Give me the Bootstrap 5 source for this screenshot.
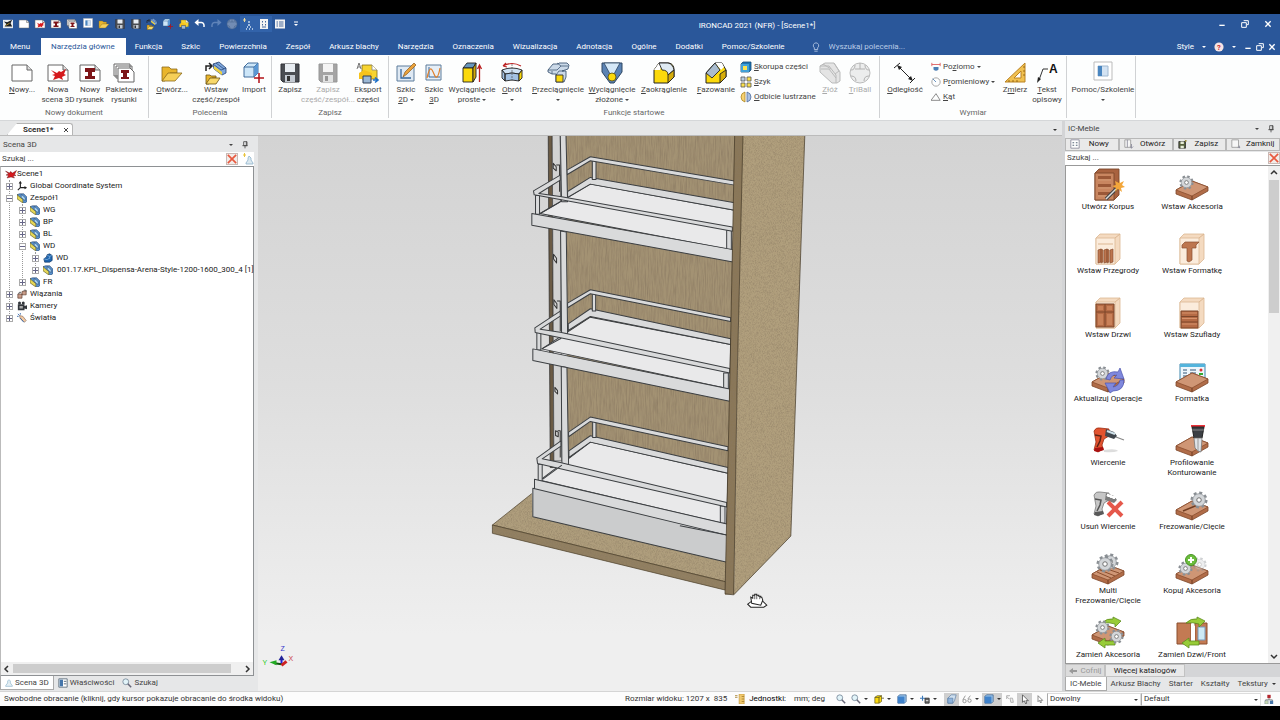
<!DOCTYPE html>
<html lang="pl">
<head>
<meta charset="utf-8">
<meta name="viewport" content="width=device-width, initial-scale=1">
<title>IRONCAD 2021 (NFR) - [Scene1*]</title>
<link href="https://cdn.jsdelivr.net/npm/bootstrap@5.3.0/dist/css/bootstrap.min.css" rel="stylesheet">
<style>
:root{--blue:#2a579a;--panel:#e6e7e8;--line:#a9abad}
body{font-family:Roboto,"Noto Sans",sans-serif;font-size:8px;line-height:10px;color:#333;background:#000;height:100vh;overflow:hidden;padding:14px 0}
button,input,select{font:inherit;color:inherit}
button{background:none;border:0;padding:0}
a{color:inherit;text-decoration:none}
svg{display:block;flex:none}
.i8{width:8px;height:8px}.i10{width:10px;height:10px}.i12{width:12px;height:12px}.i24{width:24px;height:24px}.i32{width:34px;height:34px}
.caret{width:0;height:0;border:2px solid transparent;border-top-color:currentColor;border-bottom:0;display:inline-block;vertical-align:middle;flex:none}
.head{background:var(--blue);color:#fff}
.titlebar{height:24px;padding-bottom:4px}
.titletext{padding-top:3px}
.quick button{width:16px;height:16px;display:grid;place-items:center}
.quick .lit{background:#3263aa}
.wide-gap{gap:15px}
.menu{height:17px}
.menu a{padding:0 10px 0 9px;line-height:18px;height:17px;white-space:nowrap;color:#fff}
.menu a.wide{padding:0 11px 0 10px}
.menu a.active{background:#fff;color:var(--blue)}
.hint{color:#b9cbe6;background:none;border:0;width:120px;padding:0}
.hint::placeholder{color:#b9cbe6;opacity:1}
.ribbon{background:#fdfefe;height:66px;border-bottom:1px solid #d5d7d9}
.grp{border-right:1px solid #d0d2d4;padding:5px 3px 0;margin:1px 0 2px}
.grp-name{color:#666;text-align:center;line-height:10px;margin-top:3px;height:10px}
.tools{height:44px}
.tool{display:flex;flex-direction:column;align-items:center;white-space:nowrap;line-height:10px;color:#444;overflow:visible}
.tool span{text-align:center}
.tool:disabled,.off{color:#aaa}
.tool:disabled svg{opacity:.5;filter:grayscale(1)}
.w28{width:28px}.w32{width:32px}.w36{width:36px}.w40{width:40px}.w44{width:44px}.w48{width:48px}.w56{width:56px}.w60{width:60px}.w64{width:64px}.w72{width:72px}.w76{width:76px}
.stack{margin-top:-2px}
.stack button{display:flex;align-items:center;gap:2px;height:15px;white-space:nowrap;color:#444}
.work{background:var(--panel)}
.docbar{height:15px;border-bottom:1px solid #bbb;padding:2px 5px 0 7px}
.doctab{background:#fff;border:1px solid #b5b5b5;border-bottom:0;border-radius:0 3px 0 0;padding:0 2px 0 15px;height:12px;width:66px;clip-path:polygon(10px 0,100% 0,100% 100%,0 100%)}
.left-pane{width:254px}
.pane-title{height:16px;padding:1px 5px 0 3px;color:#444}
.findbox{background:#fff;height:14px}
.findbox input{border:0;padding:0 2px;width:100%;min-width:0;background:none;line-height:12px}
.findbox input::placeholder{color:#444;opacity:1}
.clear{width:12px;height:12px;border:1px solid #c9b9b5;background:#f2ece9;display:grid;place-items:center;flex:none}
.treebox{background:#fff;border:1px solid #8e9194;border-left-color:#bbb}
.tree,.tree ul{list-style:none;margin:0;padding:0;position:relative}
.tree{padding-top:1px}
.tree ul{margin-left:13px}
.tree ul::before{content:"";position:absolute;left:8px;top:0;bottom:6px;border-left:1px dotted #999}
.tree>ul{margin-left:0}
.node{display:flex;align-items:center;height:12px;padding-left:5px;white-space:nowrap;position:relative;color:#222}
.node .txt{margin-left:3px}
.exp{width:7px;height:7px;border:1px solid #aaa;background:#fff;display:grid;place-items:center;margin-right:4px;flex:none}
.exp svg{width:5px;height:5px}
.hbar{height:13px;background:#f0f0f0;padding:0 2px}
.hbar i{background:#cdcdcd;height:9px;margin:0 12px 0 2px}
.ptabs{height:15px}
.ptabs a{display:flex;align-items:center;gap:2px;padding:0 4px;color:#444;height:14px;white-space:nowrap}
.ptabs a.active{background:#fff;border:1px solid #aaa;border-top:0}
.view{background:linear-gradient(#d3d3d3,#dedede 45%,#efefef 90%);min-width:0}
.view svg{width:100%;height:100%}
.right-pane{width:218px;border-left:3px solid #d3d4d6;background:var(--panel)}
.cmds{padding:1px 0}
.cmds button{border:1px solid #b8b8b8;background:#e9e9e9;height:13px;display:flex;align-items:center;flex:1;color:#222}
.cmds button span{flex:1;text-align:center}
.cat{background:#fff;border:1px solid #999;border-right:0;overflow:hidden;min-height:0}
.items{display:grid;grid-template-columns:84px 84px;grid-auto-rows:64px;align-content:start;padding-top:2px;flex:1}
.items button{display:flex;flex-direction:column;align-items:center;color:#222}
.vbar{width:12px;background:#f0f0f0;padding:3px 1px}
.vbar i{background:#cdcdcd;height:133px;width:10px;margin:3px 0 auto}
.more{height:13px;background:#d4d5d7}
.more button{border:1px solid #c2c2c2;background:#e9e9e9;color:#222}
.more button:disabled{color:#999;background:#dcdcdc}
.cofnij{width:40px}.wiecej{width:80px}
.status{background:#fcfcfc;height:15px;border-top:1px solid #d5d5d5;white-space:nowrap}
.status select{border:1px solid #ddd;border-left-color:#aaa;background:#fff;appearance:none;padding:0 2px;height:13px;border-radius:0;width:100%}
.drop{position:relative}
.drop .caret{position:absolute;right:3px;top:6px}
.selA{width:94px}.selB{width:120px}
.status button{display:flex;align-items:center;justify-content:center;gap:3px;height:13px}
.st1{width:15px}.st2{width:23px}.st3{width:20px}
.status .on{background:#cfcfcf}
</style>
</head>
<body class="d-flex flex-column">

<svg width="0" height="0" class="position-absolute" aria-hidden="true"><defs>
<symbol id="page" viewBox="0 0 24 24"><path d="M2 4h15l5 5v11H2z" fill="#fff" stroke="#666"/><path d="M17 4v5h5" fill="#ddd" stroke="#666"/></symbol>
<symbol id="app" viewBox="0 0 12 12"><path d="M0 1h12v10H0z" fill="#e9ecef"/><path d="M1 3l4 1 6-3-2 4 2 4H2l2-3z" fill="#1b1d1f"/><path d="M3 8l5-3" stroke="#c9a12c"/></symbol>
<symbol id="bird" viewBox="0 0 24 24"><path d="M1 6l8 4 2-3 4 3 8-5-4 8 3 2-6 1 3 4-7-2-8 2 3-5-5-1 5-2z" fill="#d5191c" stroke="#5e1013" stroke-width=".8"/></symbol>
<symbol id="scene" viewBox="0 0 24 24"><use href="#page"/><path d="M5 9l6 3 2-2 2 1 5-3-2 5 2 1-4 2 1 3-4-2-6 2 2-4-3-1 3-1z" fill="#d5191c"/></symbol>
<symbol id="draw" viewBox="0 0 24 24"><use href="#page"/><path d="M7 7h10v4h-3v4h3v3H7v-3h3v-4H7z" fill="#7d1518"/></symbol>
<symbol id="batch" viewBox="0 0 24 24"><path d="M2 3h16v12H2zM4 5h16v12H4z" fill="#fff" stroke="#666"/><path d="M6 7h12l4 4v10H6z" fill="#fff" stroke="#666"/><path d="M9 9h8v3h-2v4h2v2H9v-2h2v-4H9z" fill="#7d1518"/></symbol>
<symbol id="open" viewBox="0 0 24 24"><path d="M2 6h7l2 2h6v4h-7l-5 8H2z" fill="#e9b52c" stroke="#8a6a1c" stroke-width=".8"/><path d="M8 12h14l-7 8H2z" fill="#f6cf57" stroke="#8a6a1c" stroke-width=".8"/></symbol>
<symbol id="insert" viewBox="0 0 24 24"><path d="M2 10V5h5M5 2l3 3-3 3" fill="none" stroke="#222" stroke-width="1.500"/><path d="M9 3l6-2 7 6v5l-4 2-8-6z" fill="#7fa8df" stroke="#23406e" stroke-width=".8"/><path d="M9 3l8 6 5-2M12 2l8 6" fill="none" stroke="#23406e" stroke-width=".7"/><path d="M10 5l8 6v3l-8-6z" fill="#f0d23c"/><path d="M2 14h4l1 1h5v2H8l-3 6H2z" fill="#e9b52c" stroke="#6b5416" stroke-width=".8"/><path d="M6 17h10l-4 6H2z" fill="#f8d869" stroke="#6b5416" stroke-width=".8"/></symbol>
<symbol id="import" viewBox="0 0 24 24"><path d="M2 6l4-4h10v10l-4 4H2z" fill="#cde6f8" stroke="#2f5f92" stroke-width=".9"/><path d="M2 6h10v10M12 6l4-4" fill="none" stroke="#2f5f92" stroke-width=".9"/><path d="M12 6l4-4v10l-4 4z" fill="#5b97d3"/><path d="M17 12v10M12 17h10" stroke="#b31217" stroke-width="1.500"/></symbol>
<symbol id="save" viewBox="0 0 24 24"><path d="M3 3h18v18H5l-2-2z" fill="#4a4d52" stroke="#303338"/><path d="M7 3h10v8H7z" fill="#e8edf2"/><path d="M7 14h10v7H7z" fill="#c4cad2"/><path d="M9 15h3v5H9z" fill="#333"/></symbol>
<symbol id="export" viewBox="0 0 24 24"><path d="M1 8l2-6 2 6M2 6h2" fill="none" stroke="#555" stroke-width=".8"/><path d="M6 4h10l5 5v9H6z" fill="#f7d431" stroke="#7f6b18" stroke-width=".8"/><path d="M16 4v5h5" fill="#fff" stroke="#888" stroke-width=".8"/><path d="M3 12l5-3 8 3v6H3z" fill="#f7c31b"/><path d="M7 15h8v7H7z" fill="#9bb8d5" stroke="#2e3f57"/><path d="M17 19h5M19 16.500l3 2.500-3 2.500" stroke="#1c6fc8" stroke-width="1.600" fill="none"/></symbol>
<symbol id="sk2" viewBox="0 0 24 24"><path d="M3 5h17v15H3z" fill="#dfe9f3" stroke="#5d7d9c"/><path d="M7 8v9h10" fill="none" stroke="#35669b" stroke-width="1.300"/><path d="M9 16l2-5 9-9 2 2-9 9z" fill="#eaa23c" stroke="#8b5a1a" stroke-width=".7"/></symbol>
<symbol id="sk3" viewBox="0 0 24 24"><path d="M4 4h15v15H4z" fill="#e6eef6" stroke="#5d7d9c"/><path d="M7 6v10h11" fill="none" stroke="#35669b"/><path d="M5 17c3-14 5-9 7-4s4 5 6-6" fill="none" stroke="#e0802c" stroke-width="1.200"/></symbol>
<symbol id="extr" viewBox="0 0 24 24"><path d="M3 7l4-5h9l-3 5z" fill="#6796bd" stroke="#222" stroke-width=".9"/><path d="M3 7h10v14H3z" fill="#fbd90c" stroke="#222" stroke-width=".9"/><path d="M13 7l3-5v14l-3 5z" fill="#d0a80a" stroke="#222" stroke-width=".9"/><path d="M19.500 21V5M17.500 8l2-4 2 4" fill="none" stroke="#b22" stroke-width="1.300"/></symbol>
<symbol id="spin" viewBox="0 0 24 24"><path d="M3 5q9-5 18 0M3 5l3-3M3 5l4 1" fill="none" stroke="#b22" stroke-width="1.100"/><path d="M2 9q10-4 20 0l-3 4q-7-2-14 0z" fill="#cfe2f4" stroke="#222" stroke-width=".9"/><path d="M2 9l3 4v7l-3-3zM5 13q7-2 14 0v7q-7-2-14 0z" fill="#a3c1e2" stroke="#222" stroke-width=".9"/><path d="M22 9v8l-3 3v-7z" fill="#fbd90c" stroke="#222" stroke-width=".9"/><path d="M12 3v17" stroke="#555" stroke-dasharray="2 1" stroke-width=".7"/></symbol>
<symbol id="sweep" viewBox="0 0 24 24"><path d="M2 9l5-6h5l1-1h8l2 2-1 4-6 2h4v6l-2 5h-8v-8H6l-4-2z" fill="#cbd9e8" stroke="#425a77" stroke-width=".9"/><path d="M2 9h9l4-4h7M11 2l4 3M6 13v-3M10 14l3-4h5" fill="none" stroke="#425a77" stroke-width=".8"/><path d="M10 14h7v7h-7z" fill="#fbd90c" stroke="#333" stroke-width=".9"/></symbol>
<symbol id="loft" viewBox="0 0 24 24"><path d="M2 2h20v9l-8 11h-4L2 11z" fill="#5b83b4" stroke="#2e4663"/><path d="M4 2h16l-6 11h-4z" fill="#d5e8f7" stroke="#2e4663" stroke-width=".8"/><circle cx="12" cy="16" r="4" fill="#fbd90c" stroke="#554a10" stroke-width=".8"/></symbol>
<symbol id="fillet" viewBox="0 0 24 24"><path d="M2 9l5-7h10q5 1 5 7v7l-6 6H2z" fill="#fbd90c" stroke="#222"/><path d="M2 9l5-7h4L8 9z" fill="#fff"/><path d="M7 2h9q5 1 6 7l-6 5q0-5-6-5z" fill="#dfeaf3" stroke="#222" stroke-width=".9"/><path d="M16 14l6-5v7l-6 6z" fill="#d6ad0a" stroke="#222" stroke-width=".9"/></symbol>
<symbol id="chamf" viewBox="0 0 24 24"><path d="M2 12L11 2h7l4 7v7l-6 6H2z" fill="#fbd90c" stroke="#222"/><path d="M11 2h7l2 4-3 3z" fill="#fff"/><path d="M2 12l9-10 5 7-8 8z" fill="#a9bccf" stroke="#222" stroke-width=".9"/><path d="M16 13l6-4v7l-6 6z" fill="#d6ad0a" stroke="#222" stroke-width=".9"/></symbol>
<symbol id="shell" viewBox="0 0 12 12"><path d="M1 3l2-2h8v8l-2 2H1z" fill="#1d75b5" stroke="#174a73" stroke-width=".8"/><path d="M1 3h8v8H1z" fill="#41a1d8"/><path d="M3 5h4v4H3z" fill="#ffe34d"/></symbol>
<symbol id="patt" viewBox="0 0 12 12"><g stroke="#555" stroke-width=".8"><path d="M1 1h4v4H1z" fill="#b8cee0"/><path d="M7 1h4v4H7zM1 7h4v4H1zM7 7h4v4H7z" fill="#fbe04c"/></g></symbol>
<symbol id="mirr" viewBox="0 0 12 12"><path d="M5 1v10Q1 10 1 6t4-5z" fill="#f7d272" stroke="#a17a12" stroke-width=".7"/><path d="M7 1v10q4-1 4-5T7 1z" fill="#a9c1e2" stroke="#3f5f92" stroke-width=".7"/></symbol>
<symbol id="assem" viewBox="0 0 24 24"><path d="M2 5l5-3h9l6 9v9l-3 2h-5L2 11z" fill="#ccc" stroke="#777"/><path d="M2 5h9l7 9v8M5 3l8 5M3 8h8l7 9M16 2l5 8-4 3" fill="none" stroke="#777"/></symbol>
<symbol id="tri" viewBox="0 0 24 24"><circle cx="12" cy="12" r="10" fill="#ddd" stroke="#777"/><path d="M3 9q4 0 4-5M21 9q-4 0-4-5M3 15q5 0 5 5M21 15q-5 0-5 5M7 8h10M12 2v6" fill="none" stroke="#666"/></symbol>
<symbol id="dist" viewBox="0 0 24 24"><path d="M1 7l6-5M17 22l5-5M5 5l14 14" stroke="#222" fill="none"/><path d="M4 4l5 2-3 3zM20 20l-5-2 3-3z" fill="#222"/></symbol>
<symbol id="horz" viewBox="0 0 12 12"><path d="M1 1v4M11 1v4M1 3h10" stroke="#d55" fill="none"/><path d="M3 6h6v3q-3 3-6 0z" fill="#4d7fb5"/></symbol>
<symbol id="radi" viewBox="0 0 12 12"><circle cx="6" cy="6" r="5" fill="none" stroke="#999"/><path d="M6 6L2 2" stroke="#4d7fb5"/></symbol>
<symbol id="angl" viewBox="0 0 12 12"><path d="M0 10h11L6 2z" fill="none" stroke="#777"/></symbol>
<symbol id="meas" viewBox="0 0 24 24"><path d="M2 21h20V2z" fill="#f0c050" stroke="#b98222"/><path d="M11 17h7v-7z" fill="#fff" stroke="#b98222"/><path d="M6 19v2M10 19v2M14 19v2M20 6h2M20 10h2M20 14h2" stroke="#865708" stroke-width=".8"/></symbol>
<symbol id="note" viewBox="0 0 24 24"><path d="M4 19L8 8h5" fill="none" stroke="#333"/><path d="M2 22l1-6 3 2z" fill="#222"/><text x="14" y="12" font-size="12" font-weight="700" font-family="Liberation Sans" fill="#111">A</text></symbol>
<symbol id="helpi" viewBox="0 0 24 24"><path d="M3 1h18v18H3z" fill="#fff" stroke="#bbb"/><path d="M7 5h10v10H7z" fill="#d3e3f3" stroke="#a0b8d0"/><path d="M7 5h4v10H7z" fill="#4a86c0"/></symbol>
<symbol id="undo" viewBox="0 0 24 24"><path d="M5 9h10q6 1 5 9" fill="none" stroke="currentColor" stroke-width="3"/><path d="M9 2v14L1 9z" fill="currentColor"/></symbol>
<symbol id="redo" viewBox="0 0 24 24"><path d="M19 9H9q-6 1-5 9" fill="none" stroke="#5f83b9" stroke-width="3"/><path d="M15 2v14l8-7z" fill="#5f83b9"/></symbol>
<symbol id="x" viewBox="0 0 12 12"><path d="M2 2l8 8M10 2l-8 8" stroke="currentColor" stroke-width="2"/></symbol>
<symbol id="min" viewBox="0 0 12 12"><path d="M2 8h8" stroke="currentColor" stroke-width="2"/></symbol>
<symbol id="rest" viewBox="0 0 12 12"><path d="M4 1h7v6H9M1 4h7v7H1z" stroke="currentColor" stroke-width="1.500" fill="none"/></symbol>
<symbol id="pin" viewBox="0 0 12 12"><path d="M4 1h5v6H4zM2 7h8M6 7v4M8 1v6" fill="none" stroke="#444" stroke-width="1.200"/></symbol>
<symbol id="delx" viewBox="0 0 12 12"><path d="M1 1l10 10M11 1L1 11" stroke="#e8593f" stroke-width="2"/></symbol>
<symbol id="list" viewBox="0 0 24 24"><path d="M2 3h20v18H2z" fill="#f4f4f4"/><path d="M5 8h3M5 12h3M5 16h3M10 8h9M10 12h9M10 16h9" stroke="#47699c" stroke-width="2"/></symbol>
<symbol id="doti" viewBox="0 0 24 24"><path d="M4 2h16v20H4z" fill="#f4f4f4"/><path d="M8 6h2v3H8zM14 6h2v3h-2zM8 12h2v3H8zM14 12h2v3h-2zM8 17h8v2H8z" fill="#47699c"/></symbol>
<symbol id="tribal" viewBox="0 0 12 12"><path d="M7 3l2 2v2l2 3v1H4v-1l2-3V5z" fill="#dbe8ef" stroke="#8db3cb" stroke-width=".8"/><path d="M1 2h3M2.500 0v4" stroke="#e8c33c"/></symbol>
<symbol id="tribq" viewBox="0 0 12 12"><path d="M7 3v2M6 7h2M5 9h1M8 9h1M4 11h1M7 11h1M10 11h1" stroke="#cfe0f2" stroke-width="1.300"/><path d="M1 2h3M2.500 0v4" stroke="#e8d9a0"/></symbol>
<symbol id="tribl" viewBox="0 0 12 12"><path d="M6 1l2 2v3l3 4v1H1v-1l3-4V3z" fill="#e4eff4" stroke="#8db3cb"/></symbol>
<symbol id="tplus" viewBox="0 0 5 5"><path d="M0 2.500h5M2.500 0v5" stroke="#668"/></symbol>
<symbol id="tminus" viewBox="0 0 5 5"><path d="M0 2.500h5" stroke="#668"/></symbol>
<symbol id="axes" viewBox="0 0 12 12"><path d="M4 1v7h7M4 8l-3 3" fill="none" stroke="#222" stroke-width="1.400"/><path d="M2 3l2-3 2 3zM9 6l3 2-3 2z" fill="#222"/></symbol>
<symbol id="asm" viewBox="0 0 12 12"><path d="M0 2l3-1h5l4 4v5l-2 2H8L0 6z" fill="#5b93cf" stroke="#1f3c61" stroke-width=".7"/><path d="M0 2l7 6v4L0 7z" fill="#e6d757" stroke="#5c5620" stroke-width=".7"/><path d="M5 2l2 1 3 3v3L8 8 5 5z" fill="#a5d0f0" stroke="#1f3c61" stroke-width=".6"/></symbol>
<symbol id="part" viewBox="0 0 12 12"><path d="M1 7l3-2 1-3 3-1 3 2v6l-3 2H2z" fill="#1f66b0" stroke="#103560" stroke-width=".8"/><path d="M5 3l3 1 3-1M8 4v3M1 7l4 1 3-2" fill="none" stroke="#9cc6ea" stroke-width=".7"/></symbol>
<symbol id="bind" viewBox="0 0 12 12"><path d="M1 6h5v5H1zM6 3l5-1v5H6z" fill="#c99d89" stroke="#5b3b2d" stroke-width=".8"/><path d="M2 6q0-3 3-2M8 2q3-2 3 1" fill="none" stroke="#444"/></symbol>
<symbol id="cam" viewBox="0 0 12 12"><path d="M1 4h8v7H1zM9 6l3-1v5l-3-1z" fill="#33373c"/><circle cx="3" cy="2.500" r="1.800" fill="#33373c"/><circle cx="7.500" cy="2.500" r="1.800" fill="#33373c"/><path d="M3 6h4v3H3z" fill="#aaa"/></symbol>
<symbol id="lamp" viewBox="0 0 12 12"><path d="M3 3l4 1 4 5-2 2-5-4z" fill="#f2c9a1" stroke="#8a7060" stroke-width=".8"/><path d="M1 1l2 2M4 0v2M0 4h2M4 6l4 5" stroke="#2d62a8"/></symbol>
<symbol id="prop" viewBox="0 0 12 12"><path d="M1 1h10v10H1z" fill="#fff" stroke="#567"/><path d="M2 2h4v8H2z" fill="#4576ab"/><path d="M7 4h3M7 7h3" stroke="#456"/></symbol>
<symbol id="catn" viewBox="0 0 12 12"><path d="M1 1h10v10H1z" fill="#fff" stroke="#889"/><path d="M3 4h2v1H3zM7 4h2v1H7zM3 7h2v1H3zM7 7h2v1H7z" fill="#567"/></symbol>
<symbol id="cato" viewBox="0 0 12 12"><path d="M1 1h7v9H1z" fill="#f6f6f6" stroke="#999"/><path d="M4 1v9M9 6v5M7 9l2 2 2-2" fill="none" stroke="#889"/></symbol>
<symbol id="catz" viewBox="0 0 12 12"><path d="M1 1h8v9H1z" fill="#f6f6f6" stroke="#999"/><path d="M10 8v3M8 10h3" fill="none" stroke="#889"/></symbol>
<symbol id="cats" viewBox="0 0 12 12"><path d="M1 3h8v8H1z" fill="#56603c" stroke="#333"/><path d="M3 3h4v3H3zM3 8h4v3H3z" fill="#e7ecd8"/><path d="M8 1l3 1-2 2z" fill="#998a30"/></symbol>
<symbol id="mag" viewBox="0 0 12 12"><circle cx="4.500" cy="4.500" r="3.500" fill="#e2f4f9" stroke="#789"/><path d="M7 7l4 4" stroke="#667" stroke-width="1.800"/></symbol>
<symbol id="cubeb" viewBox="0 0 12 12"><path d="M1 3l2-2h8v8l-2 2H1z" fill="#9cc5ec" stroke="#2c5382" stroke-width=".8"/><path d="M1 3h8v8H1z" fill="#3f82cb"/></symbol>
<symbol id="persp" viewBox="0 0 12 12"><path d="M1 5l4-4h6L9 8l-2 3H1z" fill="#cfe0f0" stroke="#5a7ba3" stroke-width=".8"/><path d="M1 5h6v6H1z" fill="#8db3dc" stroke="#5a7ba3" stroke-width=".8"/></symbol>
<symbol id="cubey" viewBox="0 0 12 12"><path d="M1 4l3-2h5v7l-3 2H1z" fill="#fbd90c" stroke="#5c5620" stroke-width=".8"/><path d="M1 4h5v7M6 4l3-2M9 5h3" fill="none" stroke="#5c5620"/></symbol>
<symbol id="orient" viewBox="0 0 12 12"><path d="M0 5h6M3 2v6" stroke="#3b78b8" stroke-width="1.300"/><path d="M6 5h5v6H6z" fill="#666" stroke="#333"/><path d="M7 8h3" stroke="#fff"/></symbol>
<symbol id="glas" viewBox="0 0 12 12"><path d="M1 7l3-5M7 6l3-4" stroke="#888" fill="none"/><circle cx="3" cy="8.500" r="2" fill="none" stroke="#888"/><circle cx="9" cy="8" r="2" fill="none" stroke="#888"/></symbol>
<symbol id="hideo" viewBox="0 0 12 12"><path d="M2 3l3 3M2 6V2h4M6 5h3l1 5H7z" fill="#eee" stroke="#aaa"/></symbol>
<symbol id="curs" viewBox="0 0 12 12"><path d="M3 1v9l2-2 2 4 1-1-1-3h3z" fill="#fff" stroke="#444" stroke-width=".9"/></symbol>
<symbol id="ruler" viewBox="0 0 12 12"><path d="M5 0h6v12H5z" fill="#f0c86c" stroke="#c2963b" stroke-width=".8"/><path d="M0 2h3M0 4h3M8 3h3M8 6h3M8 9h3" stroke="#a5802e"/></symbol>
<symbol id="cfg" viewBox="0 0 12 12"><path d="M4 1h4v4H4z" fill="#b3262d"/><path d="M6 5v2M2 9V7h8v2" stroke="#555" fill="none" stroke-width=".8"/><path d="M1 8h4v4H1z" fill="#c8d9b0" stroke="#789" stroke-width=".6"/><path d="M7 8h4v4H7z" fill="#4576ab"/></symbol>
<!-- furniture catalogue -->
<symbol id="gear" viewBox="0 0 20 20"><circle cx="10" cy="10" r="8" fill="none" stroke="#8a8f94" stroke-width="3" stroke-dasharray="3.300 2.980"/><circle cx="10" cy="10" r="7" fill="#d3d6d9" stroke="#858a8f" stroke-width=".8"/><circle cx="10" cy="10" r="2.500" fill="#fff" stroke="#666"/></symbol>
<symbol id="slab" viewBox="0 0 34 34"><path d="M1 22l16-9 16 6v4l-16 9-16-6z" fill="#b06c48" stroke="#7d472b" stroke-width=".8"/><path d="M1 22l16-9 16 6-16 9z" fill="#cf9675" stroke="#8a4e2e" stroke-width=".8"/><path d="M17 28v4" stroke="#713d22"/></symbol>
<symbol id="cabL" viewBox="0 0 34 34"><path d="M5 6l4-4h20v25l-5 5H5z" fill="#f4dac0" stroke="#dcb792" stroke-width=".8"/><path d="M5 6h19v26H5z" fill="#fbecdc" stroke="#dcb792" stroke-width=".8"/><path d="M24 6l5-4" stroke="#dcb792"/></symbol>
<symbol id="korpus" viewBox="0 0 34 34"><path d="M4 5l4-4h20v26l-5 5H4z" fill="#a8623f" stroke="#7d472b" stroke-width=".9"/><path d="M4 5h19v27H4z" fill="#c98660" stroke="#7d472b" stroke-width=".9"/><path d="M7 8h13v5H7zM7 16h13v5H7zM7 24h13v5H7z" fill="#9b5837"/><path d="M7 12h13M7 20h13M7 28h13" stroke="#e0a37c" stroke-width="1.500"/><path d="M15 31l12-12" stroke="#444" stroke-width="3.500"/><path d="M15 31l10-10" stroke="#ddd" stroke-width="1.500"/><path d="M28 11l1 4 4-2-2 4 3 2-4 1 1 4-4-3-3 3 1-4-4-2 4-1-1-4 4 2z" fill="#f3a63a"/></symbol>
<symbol id="akces" viewBox="0 0 34 34"><use href="#slab"/><use href="#gear" x="4" y="7" width="15" height="15"/></symbol>
<symbol id="przeg" viewBox="0 0 34 34"><use href="#cabL"/><g fill="#bd764f" stroke="#8a5032" stroke-width=".7"><path d="M7 18l3-1v13l-3 1zM10 17l2 1v12l-2 1zM13 18l3-1v13l-3 1zM16 17l2 1v12l-2 1zM19 18l3-1v13l-3 1z"/></g><path d="M7 12h15" stroke="#dcb792"/></symbol>
<symbol id="formk" viewBox="0 0 34 34"><use href="#cabL"/><path d="M7 13l3-3h14l-3 3v3h-4v12l-3 2-2-1V16H7z" fill="#bd764f" stroke="#8a5032" stroke-width=".7"/></symbol>
<symbol id="drzwi" viewBox="0 0 34 34"><use href="#cabL"/><path d="M5 8h18v23H5z" fill="#b56b45" stroke="#7d472b"/><path d="M14 8v23M5 16h18" stroke="#7d472b"/><path d="M7 10h5v4H7zM16 10h5v4h-5zM7 18h5v11H7zM16 18h5v11h-5z" fill="#c98159"/></symbol>
<symbol id="szufl" viewBox="0 0 34 34"><use href="#cabL"/><path d="M6 15h17v17H6z" fill="#b56b45" stroke="#7d472b"/><path d="M6 20.500h17M6 26h17" stroke="#7d472b"/><path d="M7 17h15M7 22.500h15M7 28h15" stroke="#d7946d"/></symbol>
<symbol id="aktual" viewBox="0 0 34 34"><use href="#slab"/><use href="#gear" x="4" y="6" width="15" height="15"/><path d="M15 19q2-9 12-7l2-4 4 11-10-1 3-3q-5-1-7 5zM33 20q0 11-11 11l-3 2-5-10 11 0-3 4q6-1 7-7z" fill="#7f88dd" stroke="#4a53ad" stroke-width=".7"/></symbol>
<symbol id="format" viewBox="0 0 34 34"><path d="M5 4h25v20H5z" fill="#eef6fb" stroke="#3d86ad"/><path d="M5 4h25v3H5z" fill="#54b4dc"/><path d="M8 10h4M8 13h4M8 16h4M15 10h6M15 13h6" stroke="#357"/><circle cx="26" cy="10" r="1.500" fill="#d33"/><path d="M24 14h4" stroke="#3a3" stroke-width="2"/><use href="#slab"/></symbol>
<symbol id="drill" viewBox="0 0 34 34"><path d="M3 7q2-4 6-3l9 1v7l-5 3-2 6 1 4-5 3-4-2 2-8z" fill="#e2532f" stroke="#9c2f14" stroke-width=".8"/><path d="M4 11l6 1-1 5-3 6" fill="none" stroke="#5b2416" stroke-width="1.500"/><path d="M4 24l8-1 1 3-6 2-4-1z" fill="#a11"/><path d="M15 5l8 3 3 4-3 3-9-3z" fill="#40464d"/><path d="M16 7l8 3" stroke="#cfe1ea" stroke-width="2"/><path d="M25 13l8 3" stroke="#888" stroke-width="1.200"/><path d="M13 26q12-2 14 1-5 2-14 1z" fill="#ddd"/></symbol>
<symbol id="mill" viewBox="0 0 34 34"><use href="#slab"/><path d="M16 1h14v2H16z" fill="#e8323a"/><path d="M17 3h12l-2 11h-8z" fill="#3c3f44" stroke="#222"/><path d="M17 6h12" stroke="#888"/><path d="M19 14h8l-1 14-3-1-3-3z" fill="#dfe3e7" stroke="#777" stroke-width=".8"/><path d="M23 14v13" stroke="#999"/></symbol>
<symbol id="undrill" viewBox="0 0 34 34"><g style="filter:grayscale(1) brightness(1.800)"><use href="#drill" width="34" height="34"/></g><path d="M17 14l14 14M31 14L17 28" stroke="#e5584b" stroke-width="4"/></symbol>
<symbol id="frez" viewBox="0 0 34 34"><use href="#slab"/><path d="M8 23l17-7" stroke="#713d22" stroke-width="1.500"/><use href="#gear" x="15" y="3" width="18" height="18"/></symbol>
<symbol id="multi" viewBox="0 0 34 34"><use href="#slab"/><path d="M6 20l14 6M9 18l15 6M13 16l15 5" stroke="#8a4e2e"/><use href="#gear" x="10" y="1" width="18" height="18"/><use href="#gear" x="5" y="3" width="18" height="18"/></symbol>
<symbol id="kopuj" viewBox="0 0 34 34"><use href="#slab"/><use href="#gear" x="17" y="5" width="15" height="15" opacity=".4"/><use href="#gear" x="3" y="9" width="15" height="15"/><circle cx="16" cy="8" r="5.500" fill="#6cbe3d" stroke="#4a9427"/><path d="M16 5v6M13 8h6" stroke="#fff" stroke-width="2"/></symbol>
<symbol id="arr" viewBox="0 0 34 34"><path d="M11 7q5-5 11-4V1l8 4-6 6V8q-6-2-13-1z" fill="#98cc38" stroke="#5e8d20" stroke-width=".8"/><path d="M24 29H14v3l-7-5 7-5v3h10z" fill="#98cc38" stroke="#5e8d20" stroke-width=".8"/></symbol>
<symbol id="zamien" viewBox="0 0 34 34"><use href="#slab" y="-3"/><use href="#arr"/><use href="#gear" x="4" y="4" width="15" height="15"/><use href="#gear" x="18" y="13" width="15" height="15"/></symbol>
<symbol id="front" viewBox="0 0 34 34"><path d="M2 7h14v21H2zM20 7h12v21H20z" fill="#c37a53" stroke="#8a4e2e"/><path d="M16 7l4 3v17l-4 1z" fill="#fff"/><path d="M23 11h7v13h-7z" fill="#cdeaf5" stroke="#79b"/><use href="#arr"/></symbol>
</defs></svg>

<header class="head">
  <div class="titlebar d-flex align-items-center">
    <div class="quick d-flex align-items-center">
      <button aria-label="IRONCAD"><svg class="i10"><use href="#app"/></svg></button>
      <button aria-label="Nowy"><svg class="i12"><use href="#page"/></svg></button>
      <button aria-label="Nowa scena"><svg class="i12"><use href="#scene"/></svg></button>
      <button aria-label="Nowy rysunek"><svg class="i12"><use href="#draw"/></svg></button>
      <button aria-label="Pakiet"><svg class="i12"><use href="#batch"/></svg></button>
      <button aria-label="Widok"><svg class="i12"><use href="#helpi"/></svg></button>
      <button aria-label="Otwórz"><svg class="i12"><use href="#open"/></svg></button>
      <button aria-label="Zapisz"><svg class="i12"><use href="#save"/></svg></button>
      <button aria-label="Zapisz jako"><svg class="i12"><use href="#save"/></svg></button>
      <button aria-label="Wstaw"><svg class="i12"><use href="#insert"/></svg></button>
      <button aria-label="Import"><svg class="i12"><use href="#import"/></svg></button>
      <button aria-label="Eksport"><svg class="i12"><use href="#export"/></svg></button>
      <button aria-label="Cofnij"><svg class="i12"><use href="#undo"/></svg></button>
      <button aria-label="Ponów"><svg class="i12"><use href="#redo"/></svg></button>
      <button aria-label="TriBall"><svg class="i12" opacity=".4"><use href="#tri"/></svg></button>
      <button class="lit" aria-label="Zaznacz"><svg class="i12"><use href="#tribq"/></svg></button>
      <button class="lit" aria-label="Katalog"><svg class="i12"><use href="#doti"/></svg></button>
      <button aria-label="Lista"><svg class="i12"><use href="#list"/></svg></button>
      <button aria-label="Dostosuj"><svg class="i8" viewBox="0 0 8 8"><path d="M2 2h4" stroke="#fff"/><path d="M2 4h4L4 6z" fill="#fff"/></svg></button>
    </div>
    <div class="titletext flex-grow-1 text-center">IRONCAD 2021 (NFR) - [Scene1*]</div>
    <div class="d-flex wide-gap px-2">
      <button aria-label="Minimalizuj"><svg class="i8"><use href="#min"/></svg></button>
      <button aria-label="Przywróć"><svg class="i8"><use href="#rest"/></svg></button>
      <button aria-label="Zamknij"><svg class="i8"><use href="#x"/></svg></button>
    </div>
  </div>
  <nav class="menu d-flex align-items-center">
    <a href="#" class="wide">Menu</a><a href="#" class="wide active">Narzędzia główne</a><a href="#">Funkcja</a><a href="#">Szkic</a><a href="#">Powierzchnia</a><a href="#">Zespół</a><a href="#">Arkusz blachy</a><a href="#">Narzędzia</a><a href="#">Oznaczenia</a><a href="#">Wizualizacja</a><a href="#">Adnotacja</a><a href="#">Ogólne</a><a href="#">Dodatki</a><a href="#">Pomoc/Szkolenie</a>
    <svg class="i10 ms-3 me-2" viewBox="0 0 12 12"><path d="M4 9V7Q2 5 3 3t3-2 3 2-1 4v2zM4 11h4" fill="none" stroke="#b9cbe6"/></svg>
    <input class="hint" aria-label="Wyszukaj polecenia" placeholder="Wyszukaj polecenia...">
    <div class="ms-auto d-flex align-items-center gap-1 pe-1">
      <button class="me-1">Style</button><span class="caret me-1"></span>
      <button aria-label="Pomoc"><svg class="i10" viewBox="0 0 12 12"><circle cx="6" cy="6" r="5.500" fill="#f6e4e4"/><text x="3.500" y="9.500" font-size="9" font-weight="700" fill="#c22">?</text></svg></button><span class="caret me-1 ms-1"></span>
      <button aria-label="Minimalizuj dokument"><svg class="i8"><use href="#min"/></svg></button>
      <button aria-label="Przywróć dokument"><svg class="i8"><use href="#rest"/></svg></button>
      <button aria-label="Zamknij dokument"><svg class="i8"><use href="#x"/></svg></button>
    </div>
  </nav>
</header>

<section class="ribbon d-flex">
  <div class="grp px-1"><div class="tools d-flex">
    <button class="tool w36"><svg class="i24"><use href="#page"/></svg><span><u>N</u>owy...</span></button>
    <button class="tool w36"><svg class="i24"><use href="#scene"/></svg><span>Nowa<br>scena 3D</span></button>
    <button class="tool w28"><svg class="i24"><use href="#draw"/></svg><span>Nowy<br>rysunek</span></button>
    <button class="tool w40"><svg class="i24"><use href="#batch"/></svg><span>Pakietowe<br>rysunki</span></button>
  </div><div class="grp-name">Nowy dokument</div></div>
  <div class="grp"><div class="tools d-flex">
    <button class="tool w40"><svg class="i24"><use href="#open"/></svg><span><u>O</u>twórz...</span></button>
    <button class="tool w48"><svg class="i24"><use href="#insert"/></svg><span>Wstaw<br>część/zespół</span></button>
    <button class="tool w28"><svg class="i24"><use href="#import"/></svg><span>Import</span></button>
  </div><div class="grp-name">Polecenia</div></div>
  <div class="grp px-0"><div class="tools d-flex px-1">
    <button class="tool w28"><svg class="i24"><use href="#save"/></svg><span>Zapisz</span></button>
    <button class="tool w48" disabled><svg class="i24"><use href="#save"/></svg><span>Zapisz<br>część/zespół...</span></button>
    <button class="tool w32"><svg class="i24"><use href="#export"/></svg><span>Eksport<br>części</span></button>
  </div><div class="grp-name">Zapisz</div></div>
  <div class="grp"><div class="tools d-flex">
    <button class="tool w28"><svg class="i24"><use href="#sk2"/></svg><span>Szkic<br><u>2</u>D <i class="caret"></i></span></button>
    <button class="tool w28"><svg class="i24"><use href="#sk3"/></svg><span>Szkic<br><u>3</u>D</span></button>
    <button class="tool w48"><svg class="i24"><use href="#extr"/></svg><span>Wyciągnięcie<br>proste <i class="caret"></i></span></button>
    <button class="tool w32"><svg class="i24"><use href="#spin"/></svg><span><u>O</u>brót<br><i class="caret"></i></span></button>
    <button class="tool w60"><svg class="i24"><use href="#sweep"/></svg><span><u>P</u>rzeciągnięcie<br><i class="caret"></i></span></button>
    <button class="tool w48"><svg class="i24"><use href="#loft"/></svg><span><u>W</u>yciągnięcie<br>złożone <i class="caret"></i></span></button>
    <button class="tool w56"><svg class="i24"><use href="#fillet"/></svg><span><u>Z</u>aokrąglenie</span></button>
    <button class="tool w48"><svg class="i24"><use href="#chamf"/></svg><span><u>F</u>azowanie</span></button>
    <div class="stack w76">
      <button><svg class="i12"><use href="#shell"/></svg><span><u>S</u>korupa części</span></button>
      <button><svg class="i12"><use href="#patt"/></svg><span><u>S</u>zyk</span></button>
      <button><svg class="i12"><use href="#mirr"/></svg><span><u>O</u>dbicie lustrzane</span></button>
    </div>
    <button class="tool w28" disabled><svg class="i24"><use href="#assem"/></svg><span><u>Z</u>łóż</span></button>
    <button class="tool w32" disabled><svg class="i24"><use href="#tri"/></svg><span><u>T</u>riBall</span></button>
  </div><div class="grp-name">Funkcje startowe</div></div>
  <div class="grp"><div class="tools d-flex">
    <button class="tool w44"><svg class="i24"><use href="#dist"/></svg><span><u>O</u>dległość</span></button>
    <div class="stack w72 ps-1">
      <button><svg class="i10"><use href="#horz"/></svg><span>Po<u>z</u>iomo</span> <i class="caret"></i></button>
      <button><svg class="i10"><use href="#radi"/></svg><span>P<u>r</u>omieniowy</span> <i class="caret"></i></button>
      <button><svg class="i10"><use href="#angl"/></svg><span><u>K</u>ąt</span></button>
    </div>
    <button class="tool w32"><svg class="i24"><use href="#meas"/></svg><span>Z<u>m</u>ierz</span></button>
    <button class="tool w32"><svg class="i24"><use href="#note"/></svg><span><u>T</u>ekst<br>opisowy</span></button>
  </div><div class="grp-name">Wymiar</div></div>
  <div class="grp px-0"><div class="tools d-flex ps-1">
    <button class="tool w64"><svg class="i24"><use href="#helpi"/></svg><span>Pomoc/Szkolenie<br><i class="caret"></i></span></button>
  </div></div>
</section>

<main class="work d-flex flex-grow-1 overflow-hidden">
  <div class="d-flex flex-column flex-grow-1 overflow-hidden">
    <div class="docbar d-flex align-items-end justify-content-between">
      <div class="doctab d-flex align-items-center justify-content-between"><b>Scene1*</b><button aria-label="Zamknij kartę"><svg class="i8" viewBox="0 0 8 8"><path d="M2 2l4 4M6 2L2 6" stroke="#444"/></svg></button></div>
      <span class="caret mb-1"></span>
    </div>
    <div class="d-flex flex-grow-1 overflow-hidden">
      <aside class="left-pane d-flex flex-column flex-shrink-0">
        <div class="pane-title d-flex align-items-center"><span>Scena 3D</span><span class="caret ms-auto me-2"></span><svg class="i8"><use href="#pin"/></svg></div>
        <div class="findbox d-flex align-items-center"><input aria-label="Szukaj w scenie" placeholder="Szukaj ..."><button class="clear" aria-label="Wyczyść"><svg class="i10"><use href="#delx"/></svg></button><svg class="i12 ms-1"><use href="#tribal"/></svg></div>
        <div class="treebox d-flex flex-column flex-grow-1">
          <div class="tree flex-grow-1">
            <div class="node ps-1"><svg class="i12"><use href="#bird"/></svg><span class="txt ms-0">Scene1</span></div>
            <ul>
              <li><div class="node"><button class="exp" aria-label="Rozwiń"><svg><use href="#tplus"/></svg></button><svg class="i10"><use href="#axes"/></svg><span class="txt">Global Coordinate System</span></div></li>
              <li><div class="node"><button class="exp" aria-label="Zwiń"><svg><use href="#tminus"/></svg></button><svg class="i10"><use href="#asm"/></svg><span class="txt">Zespół1</span></div>
                <ul>
                  <li><div class="node"><button class="exp" aria-label="Rozwiń"><svg><use href="#tplus"/></svg></button><svg class="i10"><use href="#asm"/></svg><span class="txt">WG</span></div></li>
                  <li><div class="node"><button class="exp" aria-label="Rozwiń"><svg><use href="#tplus"/></svg></button><svg class="i10"><use href="#asm"/></svg><span class="txt">BP</span></div></li>
                  <li><div class="node"><button class="exp" aria-label="Rozwiń"><svg><use href="#tplus"/></svg></button><svg class="i10"><use href="#asm"/></svg><span class="txt">BL</span></div></li>
                  <li><div class="node"><button class="exp" aria-label="Zwiń"><svg><use href="#tminus"/></svg></button><svg class="i10"><use href="#asm"/></svg><span class="txt">WD</span></div>
                    <ul>
                      <li><div class="node"><button class="exp" aria-label="Rozwiń"><svg><use href="#tplus"/></svg></button><svg class="i10"><use href="#part"/></svg><span class="txt">WD</span></div></li>
                      <li><div class="node"><button class="exp" aria-label="Rozwiń"><svg><use href="#tplus"/></svg></button><svg class="i10"><use href="#asm"/></svg><span class="txt ms-0 ps-1">001.17.KPL_Dispensa-Arena-Style-1200-1600_300_4 [1]</span></div></li>
                    </ul></li>
                  <li><div class="node"><button class="exp" aria-label="Rozwiń"><svg><use href="#tplus"/></svg></button><svg class="i10"><use href="#asm"/></svg><span class="txt">FR</span></div></li>
                </ul></li>
              <li><div class="node"><button class="exp" aria-label="Rozwiń"><svg><use href="#tplus"/></svg></button><svg class="i10"><use href="#bind"/></svg><span class="txt">Wiązania</span></div></li>
              <li><div class="node"><button class="exp" aria-label="Rozwiń"><svg><use href="#tplus"/></svg></button><svg class="i10"><use href="#cam"/></svg><span class="txt">Kamery</span></div></li>
              <li><div class="node"><button class="exp" aria-label="Rozwiń"><svg><use href="#tplus"/></svg></button><svg class="i10"><use href="#lamp"/></svg><span class="txt">Światła</span></div></li>
            </ul>
          </div>
          <div class="hbar d-flex align-items-center"><svg class="i8" viewBox="0 0 8 8"><path d="M5 1L2 4l3 3" fill="none" stroke="#333" stroke-width="1.500"/></svg><i class="flex-grow-1"></i><svg class="i8" viewBox="0 0 8 8"><path d="M3 1l3 3-3 3" fill="none" stroke="#333" stroke-width="1.500"/></svg></div>
        </div>
        <nav class="ptabs d-flex"><a href="#" class="active"><svg class="i8"><use href="#tribl"/></svg>Scena 3D</a><a href="#"><svg class="i10"><use href="#prop"/></svg>Właściwości</a><a href="#"><svg class="i10"><use href="#mag"/></svg>Szukaj</a></nav>
      </aside>
      <div class="view flex-grow-1 ms-1">
        <svg viewBox="257 136 805 554" preserveAspectRatio="xMidYMin slice" role="img" aria-label="Szafka z koszami cargo">
          <defs>
            <filter id="grain" x="0" y="0" width="100%" height="100%"><feTurbulence type="fractalNoise" baseFrequency=".3 .02" numOctaves="3" seed="4"/><feColorMatrix values="0 0 0 0 .25  0 0 0 0 .19  0 0 0 0 .12  1.400 0 0 0 -.5"/><feComposite in2="SourceGraphic" operator="in" result="n"/><feMerge><feMergeNode in="SourceGraphic"/><feMergeNode in="n"/></feMerge></filter>
            <filter id="grain2" x="0" y="0" width="100%" height="100%"><feTurbulence type="fractalNoise" baseFrequency=".5 .2" numOctaves="2" seed="9"/><feColorMatrix values="0 0 0 0 .25  0 0 0 0 .19  0 0 0 0 .12  1.200 0 0 0 -.46"/><feComposite in2="SourceGraphic" operator="in" result="n"/><feMerge><feMergeNode in="SourceGraphic"/><feMergeNode in="n"/></feMerge></filter>
          </defs>
          <!-- cabinet drawn on a 3x grid -->
          <g transform="translate(480 130) scale(.33333)" stroke-linejoin="round">
            <path filter="url(#grain)" d="M256 10H765L742 1300 262 1130z" fill="#a39273"/>
            <path d="M204 10h12l5 1000h-11z" fill="#6b5b45" stroke="#222" stroke-width="2"/>
            <path d="M216 10h24l5 980h-24z" fill="#d2d2d2" stroke="#444" stroke-width="2"/>
            <g fill="none" stroke="#333" stroke-width="3"><path d="M219 100v14l9 8v-12zM220 372v14l9 12v-14zM221 508v14l9 12v-14zM224 770v12l8 8v-10zM226 900v14l8 4v-14z"/><path d="M228 105h10v80M230 512h10v90M232 900h8v80"/></g>
            <path filter="url(#grain2)" d="M155 1088L37 1182 735 1352 745 1290 158 1157z" fill="#af9e7d"/>
            <path d="M155 1088L37 1182 735 1352" fill="none" stroke="#4a3d28" stroke-width="2"/>
            <path filter="url(#grain2)" d="M37 1182v25L735 1377v-25z" fill="#928062"/><path d="M37 1182v25L735 1377v-25z" fill="none" stroke="#4a3d28" stroke-width="2"/>
            <g stroke="#3c3f42" stroke-width="3" fill="#d9dadb">
              <!-- upper basket -->
              <path d="M330 162L762 240 757 360 180 250z" fill="#e9e9ea"/>
              <path d="M330 142L762 218V240L330 162 262 202V184z"/>
              <path d="M336 92h11v56h-11z"/><path d="M330 80L762 153V165L330 92 260 134V120z"/>
              <path d="M240 10h17l5 205h-18z"/>
              <path d="M738 300h14v58h-14zM166 196h12v56h-12z"/>
              <path d="M160 182L240 135V150L176 190 240 199 755 290V303L162 194zM180 250l60-35"/>
              <path d="M155 250L757 358V395L155 285z"/>
              <!-- middle basket -->
              <path d="M330 560L750 642 747 775 185 655z" fill="#e9e9ea"/>
              <path d="M330 535L750 625V642L330 558 264 600V580z"/>
              <path d="M336 490h10v52h-10z"/><path d="M330 478L750 562V573L330 490 262 532V518z"/>
              <path d="M241 302l17 3 4 305h-18z"/>
              <path d="M729 727h14v48h-14zM170 606h12v52h-12z"/>
              <path d="M164 592L240 542V557L180 596 240 605 747 714V727L165 606zM185 655l58-32"/>
              <path d="M158 655L747 775V812L158 690z"/>
              <!-- lower basket -->
              <path d="M330 934L742 1027 738 1180 180 1048z" fill="#e9e9ea"/>
              <path d="M330 915L742 1010V1027L330 934 266 980V960z"/>
              <path d="M337 870h10v50h-10z"/><path d="M330 859L742 948V960L330 872 265 918V904z"/>
              <path d="M243 708l17 3 5 290h-20z"/>
              <path d="M719 1125h14v52h-14zM174 1000h12v50h-12z"/>
              <path d="M170 982L242 930V946L186 984 240 995 738 1115V1128L172 998zM188 1045l57-42"/>
              <path d="M163 1045L742 1180V1215L163 1077z"/>
              <path d="M158 1072L742 1213V1294L158 1157z" fill="#cbcccd"/>
              <path d="M598 1184L742 1213" fill="none"/>
            </g>
            <path filter="url(#grain2)" d="M762 10H790L770 720 760 1390H733L748 720z" fill="#8a7758"/>
            <path filter="url(#grain2)" d="M787 10H972L930 1215 760 1390 770 720z" fill="#b09f7d"/>
            <path d="M762 10L748 720 733 1388 759 1391 930 1215 972 10M787 10L770 720 759 1390" fill="none" stroke="#3d3322" stroke-width="2"/>
          </g>
          <!-- rotate cursor -->
          <g fill="#fff" stroke="#222" stroke-width="1"><path d="M747 603l4-3h11l4 4-3 2h-13z"/><path d="M751 602l-1-6 2 1v-3h2v-1h2v1h2v1h2v1h1l1 3-2 5z"/><path d="M754 594v4M756 594v4M759 595v3" stroke-width=".7"/></g>
          <!-- axis triad -->
          <path d="M282 663v-6" stroke="#22d" stroke-width="2"/><path d="M279 659l3-5 3 5z" fill="#229"/><path d="M282 663l-7-1" stroke="#151" stroke-width="2"/><path d="M270 661l7-2v5z" fill="#2a2"/><path d="M282 664l5-4" stroke="#c22" stroke-width="3"/>
          <g font-size="7" font-family="Liberation Sans"><text x="281" y="650" fill="#33c">Z</text><text x="263" y="664" fill="#2c2">Y</text><text x="289" y="660" fill="#c44">X</text></g>
        </svg>
      </div>
    </div>
  </div>
  <aside class="right-pane d-flex flex-column flex-shrink-0">
    <div class="pane-title d-flex align-items-center"><span>IC-Meble</span><span class="caret ms-auto me-2"></span><svg class="i8"><use href="#pin"/></svg></div>
    <div class="cmds d-flex"><button class="ps-1"><svg class="i10"><use href="#catn"/></svg><span>Nowy</span></button><button class="ps-1"><svg class="i10"><use href="#cato"/></svg><span>Otwórz</span></button><button class="ps-1"><svg class="i10"><use href="#cats"/></svg><span>Zapisz</span></button><button class="ps-1"><svg class="i10"><use href="#catz"/></svg><span>Zamknij</span></button></div>
    <div class="findbox d-flex align-items-center"><input aria-label="Szukaj w katalogu" placeholder="Szukaj ..."><button class="clear" aria-label="Wyczyść katalog"><svg class="i10"><use href="#delx"/></svg></button></div>
    <div class="cat d-flex flex-grow-1">
      <div class="items">
        <button><svg class="i32"><use href="#korpus"/></svg>Utwórz Korpus</button>
        <button><svg class="i32"><use href="#akces"/></svg>Wstaw Akcesoria</button>
        <button><svg class="i32"><use href="#przeg"/></svg>Wstaw Przegrody</button>
        <button><svg class="i32"><use href="#formk"/></svg>Wstaw Formatkę</button>
        <button><svg class="i32"><use href="#drzwi"/></svg>Wstaw Drzwi</button>
        <button><svg class="i32"><use href="#szufl"/></svg>Wstaw Szuflady</button>
        <button><svg class="i32"><use href="#aktual"/></svg>Aktualizuj Operacje</button>
        <button><svg class="i32"><use href="#format"/></svg>Formatka</button>
        <button><svg class="i32"><use href="#drill"/></svg>Wiercenie</button>
        <button><svg class="i32"><use href="#mill"/></svg>Profilowanie<br>Konturowanie</button>
        <button><svg class="i32"><use href="#undrill"/></svg>Usuń Wiercenie</button>
        <button><svg class="i32"><use href="#frez"/></svg>Frezowanie/Cięcie</button>
        <button><svg class="i32"><use href="#multi"/></svg>Multi<br>Frezowanie/Cięcie</button>
        <button><svg class="i32"><use href="#kopuj"/></svg>Kopuj Akcesoria</button>
        <button><svg class="i32"><use href="#zamien"/></svg>Zamień Akcesoria</button>
        <button><svg class="i32"><use href="#front"/></svg>Zamień Dzwi/Front</button>
      </div>
      <div class="vbar d-flex flex-column align-items-center"><svg class="i8" viewBox="0 0 8 8"><path d="M1 5l3-3 3 3" fill="none" stroke="#333" stroke-width="1.500"/></svg><i></i><svg class="i8" viewBox="0 0 8 8"><path d="M1 3l3 3 3-3" fill="none" stroke="#333" stroke-width="1.500"/></svg></div>
    </div>
    <div class="more d-flex"><button class="cofnij d-flex align-items-center justify-content-center gap-1" disabled><svg class="i8" viewBox="0 0 8 8"><path d="M0 4l4-3v2h4v2H4v2z" fill="#999"/></svg>Cofnij</button><button class="wiecej">Więcej katalogów</button></div>
    <nav class="ptabs d-flex align-items-center"><a href="#" class="active">IC-Meble</a><a href="#">Arkusz Blachy</a><a href="#">Starter</a><a href="#">Kształty</a><a href="#">Tekstury</a><span class="caret ms-auto me-1"></span></nav>
  </aside>
</main>

<footer class="status d-flex align-items-center">
  <span class="px-1">Swobodne obracanie (kliknij, gdy kursor pokazuje obracanie do środka widoku)</span>
  <span class="ms-auto">Rozmiar widoku: 1207 x&nbsp; 835</span>
  <svg class="i10 ms-2 me-1"><use href="#ruler"/></svg><span class="text-black">Jednostki:</span><span class="mx-2">mm; deg</span>
  <button class="st1" aria-label="Powiększ"><svg class="i10"><use href="#mag"/></svg></button>
  <button class="st2" aria-label="Dopasuj"><svg class="i10"><use href="#mag"/></svg><span class="caret"></span></button>
  <button class="st2" aria-label="Widok"><svg class="i10"><use href="#cubey"/></svg><span class="caret"></span></button>
  <button class="st2" aria-label="Rzut"><svg class="i10"><use href="#cubeb"/></svg><span class="caret"></span></button>
  <button class="st2 me-1" aria-label="Orientacja"><svg class="i10"><use href="#orient"/></svg><span class="caret"></span></button>
  <button class="st1 on" aria-label="Perspektywa"><svg class="i10"><use href="#persp"/></svg></button>
  <button class="st2" aria-label="Pokaż"><svg class="i10"><use href="#glas"/></svg><span class="caret"></span></button>
  <button class="st3 on" aria-label="Cieniowanie"><svg class="i10"><use href="#cubeb"/></svg><span class="caret"></span></button>
  <button class="st1" aria-label="Ukryj" disabled><svg class="i10"><use href="#hideo"/></svg></button>
  <button class="st1 on" aria-label="Wybór"><svg class="i10"><use href="#curs"/></svg></button>
  <button class="st1" aria-label="Filtr"><svg class="i8"><use href="#curs"/></svg></button>
  <div class="drop selA"><select aria-label="Typ wyboru"><option>Dowolny</option></select><span class="caret"></span></div>
  <div class="drop selB"><select aria-label="Konfiguracja"><option>Default</option></select><span class="caret"></span></div>
  <button class="st1 me-1" aria-label="Konfiguracje"><svg class="i10"><use href="#cfg"/></svg></button>
</footer>
<script src="https://cdn.jsdelivr.net/npm/bootstrap@5.3.0/dist/js/bootstrap.bundle.min.js"></script>
</body>
</html>
